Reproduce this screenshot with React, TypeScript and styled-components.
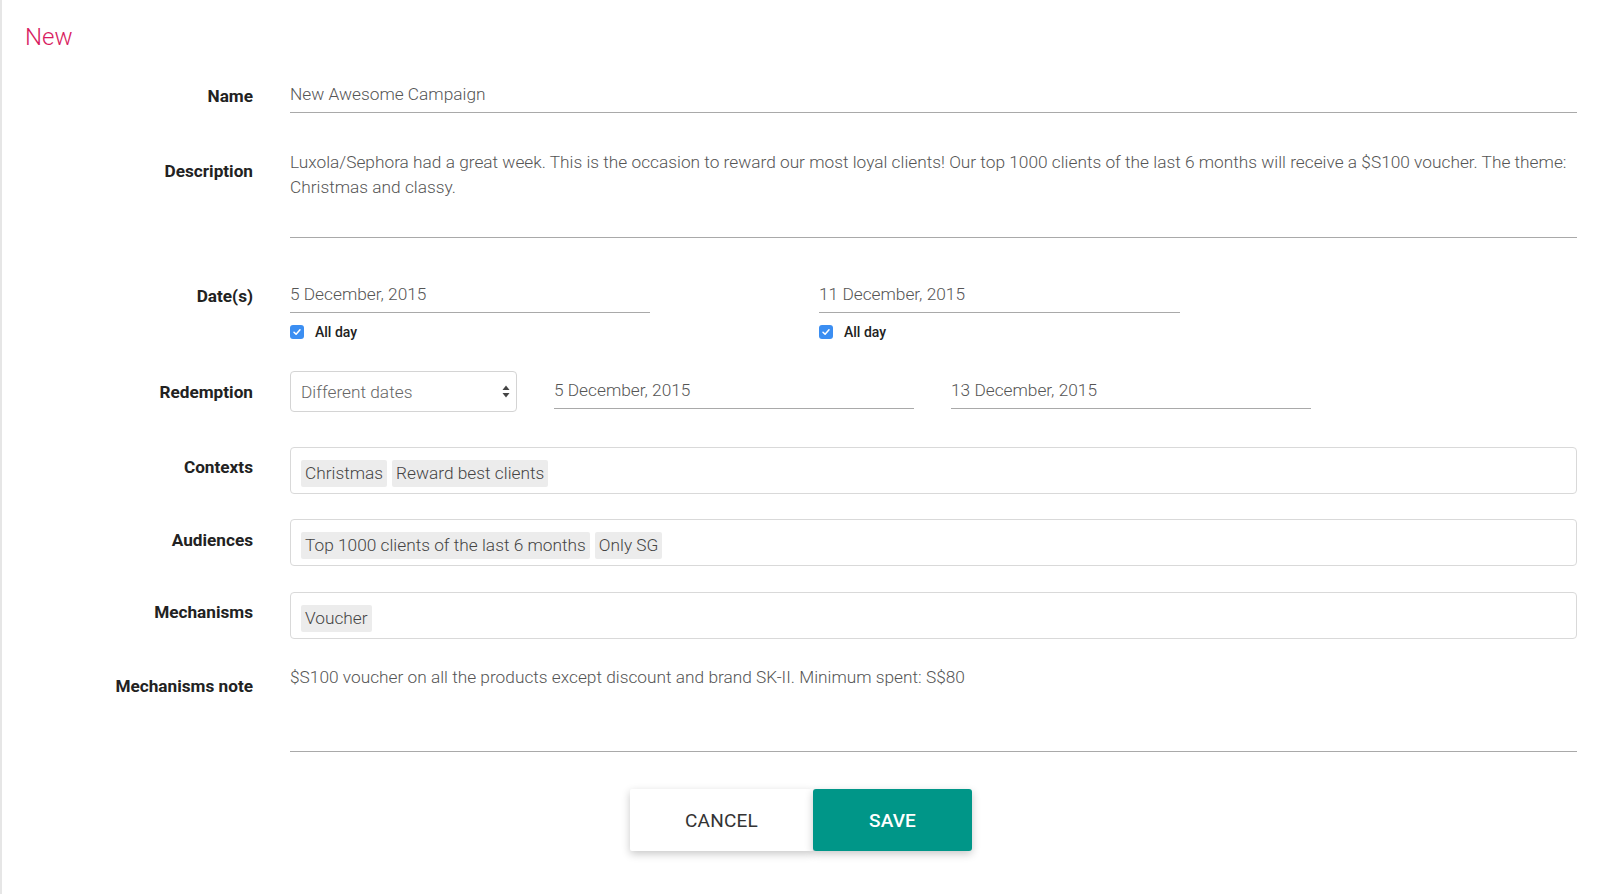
import styled, { createGlobalStyle } from "styled-components";

const GlobalStyle = createGlobalStyle`
  html, body {
    margin: 0;
    padding: 0;
    background: #ffffff;
  }
  body {
    font-family: Roboto, "Liberation Sans", Arial, sans-serif;
    -webkit-font-smoothing: antialiased;
  }
`;

const Page = styled.div`
  min-height: 894px;
  box-sizing: border-box;
  border-left: 2px solid #e6e6e6;
  background: #ffffff;
`;

const Title = styled.h1`
  margin: 0;
  padding: 23px 0 0 23px;
  font-size: 24px;
  line-height: 28px;
  font-weight: 300;
  color: #d81b60;
`;

const Form = styled.form`
  display: flex;
  flex-direction: column;
  padding: 31px 23px 0 0;
`;

const Row = styled.div<{ $top?: number }>`
  display: grid;
  grid-template-columns: 251px 1fr;
  column-gap: 37px;
  align-items: start;
  margin-top: ${(p) => p.$top ?? 0}px;
`;

const Label = styled.label<{ $offset?: number }>`
  padding-top: ${(p) => p.$offset ?? 8}px;
  text-align: right;
  font-size: 17.2px;
  line-height: 24px;
  font-weight: 700;
  color: #222222;
`;

const LineField = styled.div<{ $width?: number; $minHeight?: number; $top?: number }>`
  box-sizing: border-box;
  width: ${(p) => (p.$width ? `${p.$width}px` : "100%")};
  min-height: ${(p) => p.$minHeight ?? 31}px;
  margin-top: ${(p) => p.$top ?? 0}px;
  padding-bottom: 6px;
  border-bottom: 1px solid #a9a9a9;
  font-size: 17.3px;
  line-height: 24px;
  font-weight: 300;
  color: #555555;
  white-space: nowrap;
`;

const Paragraph = styled(LineField)`
  line-height: 25px;
`;

const DatePair = styled.div`
  display: flex;
  gap: 169px;
`;

const DateColumn = styled.div`
  display: flex;
  flex-direction: column;
`;

const CheckRow = styled.div`
  display: flex;
  align-items: center;
  gap: 11px;
  margin-top: 9px;
  font-size: 14px;
  line-height: 20px;
  font-weight: 500;
  color: #222222;
`;

const CheckBox = styled.span`
  width: 14px;
  height: 14px;
  border-radius: 3px;
  background: #3b8ef2;
  display: inline-flex;
  align-items: center;
  justify-content: center;
`;

const RedemptionFields = styled.div`
  display: flex;
  align-items: flex-start;
  gap: 37px;
`;

const Select = styled.div`
  box-sizing: border-box;
  width: 227px;
  height: 41px;
  padding: 0 6px 0 10px;
  border: 1px solid #d4d4d4;
  border-radius: 4px;
  display: flex;
  align-items: center;
  justify-content: space-between;
  font-size: 17.3px;
  font-weight: 300;
  color: #666666;
`;

const TagBox = styled.div`
  box-sizing: border-box;
  height: 47px;
  padding: 5px 10px 0;
  border: 1px solid #d9d9d9;
  border-radius: 4px;
  display: flex;
  align-items: center;
  gap: 5px;
`;

const Tag = styled.span`
  padding: 0 4px;
  background: #ececec;
  border-radius: 2px;
  font-size: 17.3px;
  line-height: 27px;
  font-weight: 300;
  color: #444444;
`;

const ButtonBar = styled.div`
  display: flex;
  justify-content: center;
  margin-top: 37px;
`;

const Button = styled.button<{ $primary?: boolean; $width: number }>`
  width: ${(p) => p.$width}px;
  height: 62px;
  border: none;
  border-radius: ${(p) => (p.$primary ? "3px" : "2px 0 0 2px")};
  background: ${(p) => (p.$primary ? "#009688" : "#ffffff")};
  color: ${(p) => (p.$primary ? "#ffffff" : "#333333")};
  box-shadow: 0 3px 8px rgba(0, 0, 0, 0.22);
  font-family: Roboto, "Liberation Sans", Arial, sans-serif;
  font-size: 19px;
  font-weight: ${(p) => (p.$primary ? 500 : 400)};
  letter-spacing: 0.2px;
  cursor: pointer;
  position: relative;
  z-index: ${(p) => (p.$primary ? 1 : 0)};
`;

function Check() {
  return (
    <CheckBox>
      <svg width="10" height="10" viewBox="0 0 10 10">
        <path d="M2 5.2 L4.1 7.3 L8 2.8" fill="none" stroke="#fff" strokeWidth="1.5" strokeLinecap="round" strokeLinejoin="round" />
      </svg>
    </CheckBox>
  );
}

function SelectArrows() {
  return (
    <svg width="8" height="13" viewBox="0 0 8 13">
      <path d="M4 0.5 L7.5 5 L0.5 5 Z" fill="#444" />
      <path d="M4 12.5 L7.5 8 L0.5 8 Z" fill="#444" />
    </svg>
  );
}

export default function App() {
  return (
    <>
      <GlobalStyle />
      <Page>
        <Title>New</Title>
        <Form>
          <Row>
            <Label $offset={2}>Name</Label>
            <LineField>New Awesome Campaign</LineField>
          </Row>

          <Row $top={37}>
            <Label $offset={9}>Description</Label>
            <Paragraph $minHeight={88}>
              Luxola/Sephora had a great week. This is the occasion to reward our most loyal clients! Our top 1000 clients of the last 6 months will receive a $S100 voucher. The theme:
              <br />
              Christmas and classy.
            </Paragraph>
          </Row>

          <Row $top={44}>
            <Label $offset={2}>Date(s)</Label>
            <DatePair>
              <DateColumn>
                <LineField $width={360}>5 December, 2015</LineField>
                <CheckRow>
                  <Check />
                  All day
                </CheckRow>
              </DateColumn>
              <DateColumn>
                <LineField $width={361}>11 December, 2015</LineField>
                <CheckRow>
                  <Check />
                  All day
                </CheckRow>
              </DateColumn>
            </DatePair>
          </Row>

          <Row $top={29}>
            <Label $offset={9}>Redemption</Label>
            <RedemptionFields>
              <Select>
                Different dates
                <SelectArrows />
              </Select>
              <LineField $width={360} $top={7}>5 December, 2015</LineField>
              <LineField $width={360} $top={7}>13 December, 2015</LineField>
            </RedemptionFields>
          </Row>

          <Row $top={35}>
            <Label $offset={8}>Contexts</Label>
            <TagBox>
              <Tag>Christmas</Tag>
              <Tag>Reward best clients</Tag>
            </TagBox>
          </Row>

          <Row $top={25}>
            <Label $offset={9}>Audiences</Label>
            <TagBox>
              <Tag>Top 1000 clients of the last 6 months</Tag>
              <Tag>Only SG</Tag>
            </TagBox>
          </Row>

          <Row $top={26}>
            <Label $offset={8}>Mechanisms</Label>
            <TagBox>
              <Tag>Voucher</Tag>
            </TagBox>
          </Row>

          <Row $top={26}>
            <Label $offset={9}>Mechanisms note</Label>
            <LineField $minHeight={87}>
              $S100 voucher on all the products except discount and brand SK-II. Minimum spent: S$80
            </LineField>
          </Row>
        </Form>

        <ButtonBar>
          <Button type="button" $width={183}>CANCEL</Button>
          <Button type="button" $primary $width={159}>SAVE</Button>
        </ButtonBar>
      </Page>
    </>
  );
}
